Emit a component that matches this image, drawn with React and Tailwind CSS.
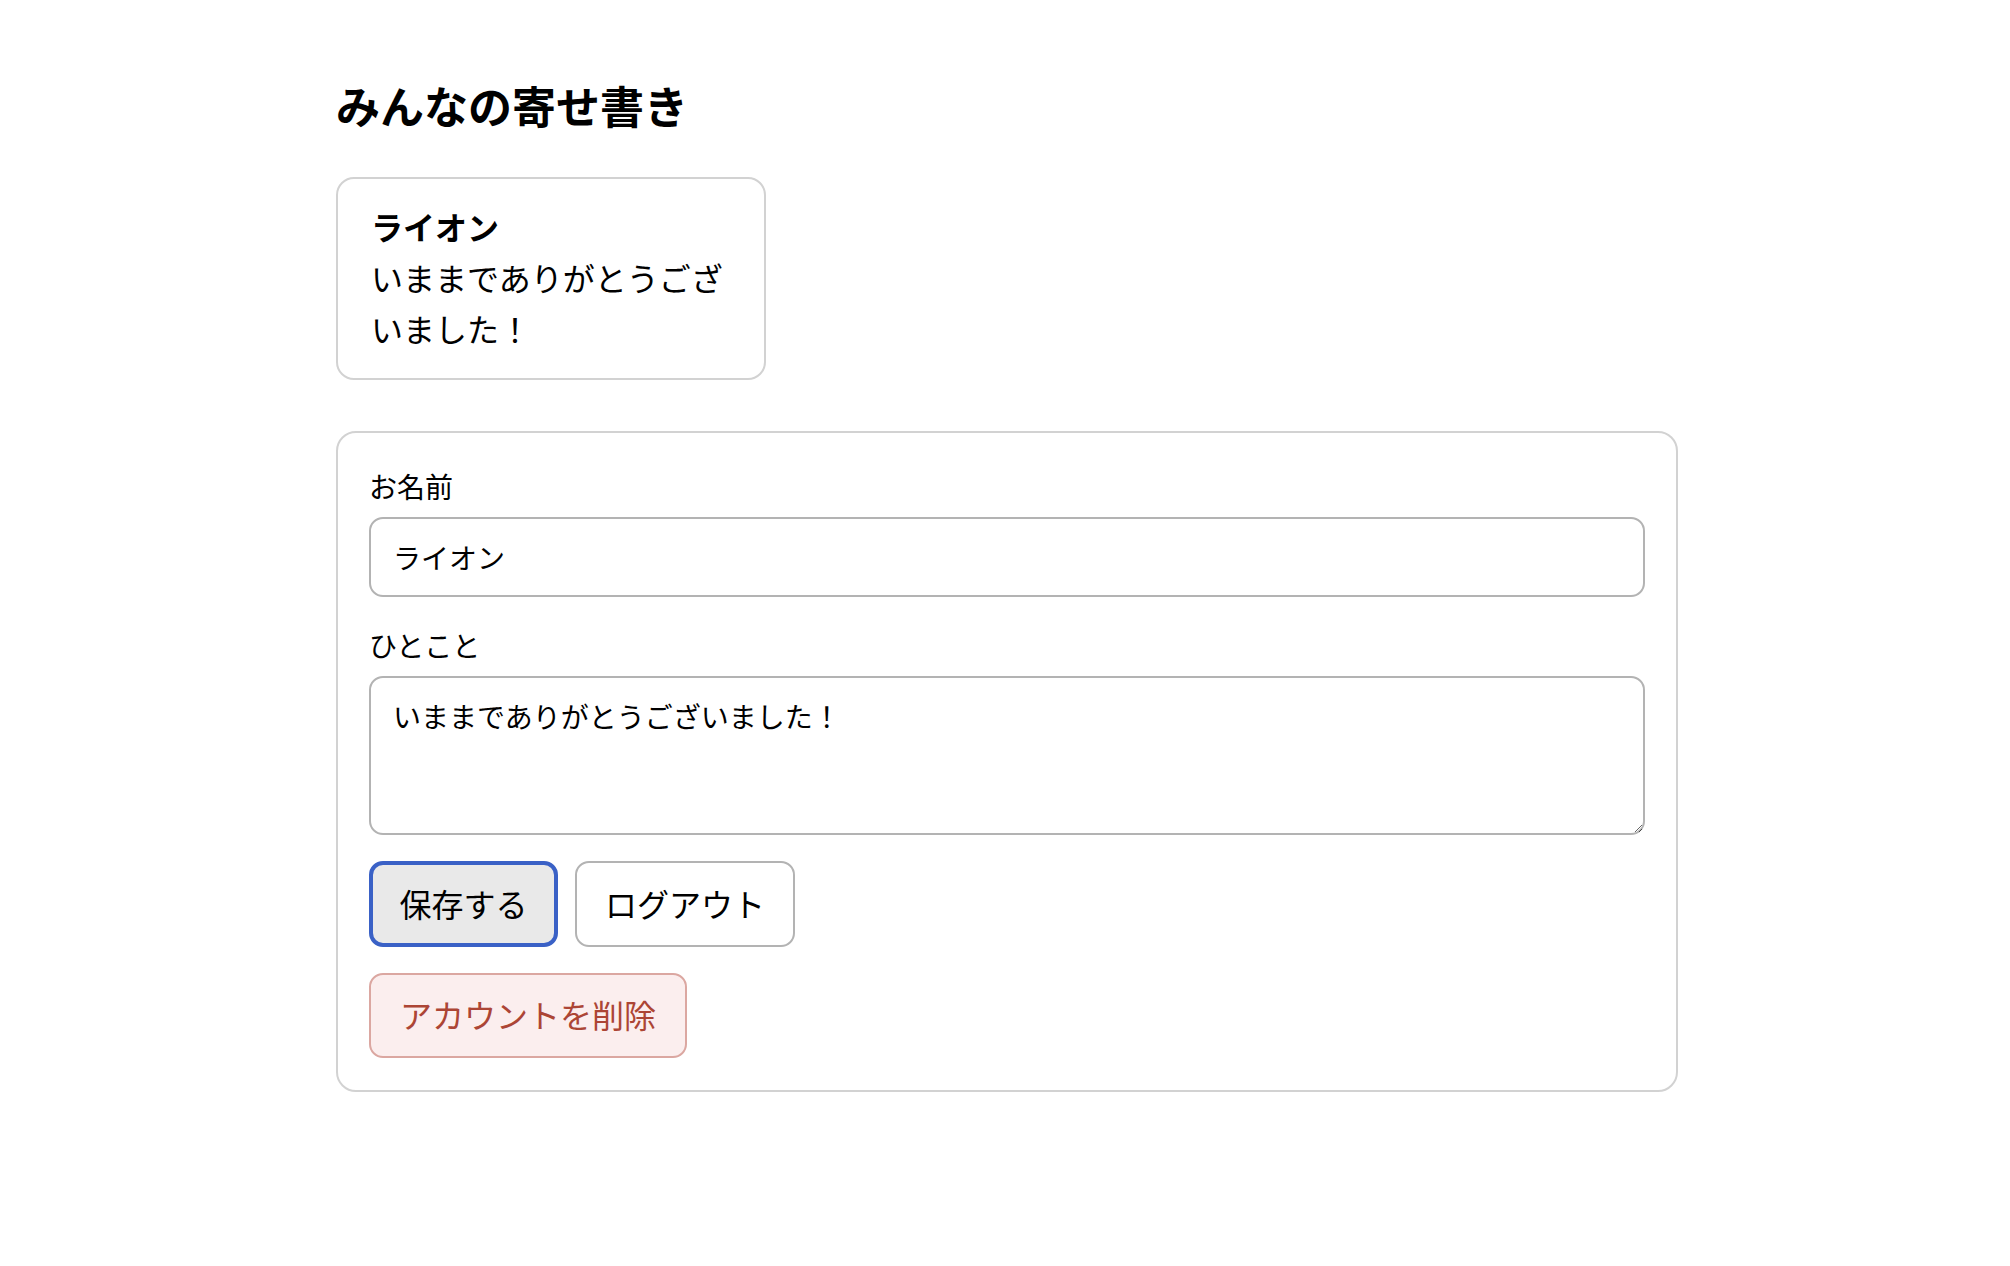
export default function App() {
  const jp = { fontFamily: '"Noto Sans CJK JP", "Noto Sans", sans-serif' };
  return (
    <div className="min-h-[1266px] bg-white text-black" style={jp}>
      <div className="ml-[336px] w-[1342px] pt-[75px]">
        <h1 className="text-[44px] leading-[60px] font-bold">みんなの寄せ書き</h1>

        {/* posted message */}
        <div className="mt-[42px] w-[430px] rounded-[18px] border-2 border-[#d2d2d2] px-[33px] pt-[22px] pb-[24px] text-[32px] leading-[51px]">
          <div className="font-bold">ライオン</div>
          <div>いままでありがとうございました！</div>
        </div>

        {/* edit form */}
        <div className="mt-[51px] rounded-[20px] border-2 border-[#d2d2d2] px-[31px] pt-[31px] pb-[32px]">
          <label className="block text-[28px] leading-[44px]">お名前</label>
          <input
            className="mt-[9px] block h-[80px] w-full rounded-[14px] border-2 border-[#b3b3b3] bg-white px-[22px] text-[28px] outline-none"
            style={jp}
            defaultValue="ライオン"
          />
          <label className="mt-[26px] block text-[28px] leading-[44px]">ひとこと</label>
          <textarea
            className="mt-[9px] block h-[159px] w-full rounded-[14px] border-2 border-[#b3b3b3] bg-white px-[22px] pt-[17px] text-[28px] leading-[42px] outline-none"
            style={jp}
            defaultValue="いままでありがとうございました！"
          />
          <div className="mt-[26px] flex gap-[17px]">
            <button className="flex h-[86px] w-[189px] items-center justify-center rounded-[14px] border-[4px] border-[#3a61c6] bg-[#e9e9e9] pb-[3px] text-[32px]">
              保存する
            </button>
            <button className="flex h-[86px] w-[220px] items-center justify-center rounded-[14px] border-2 border-[#b3b3b3] bg-white pb-[3px] text-[32px]">
              ログアウト
            </button>
          </div>
          <button className="mt-[26px] flex h-[85px] w-[318px] items-center justify-center rounded-[14px] border-2 border-[#dba7a1] bg-[#fbeeee] pb-[3px] text-[32px] text-[#ac4535]">
            アカウントを削除
          </button>
        </div>
      </div>
    </div>
  );
}
